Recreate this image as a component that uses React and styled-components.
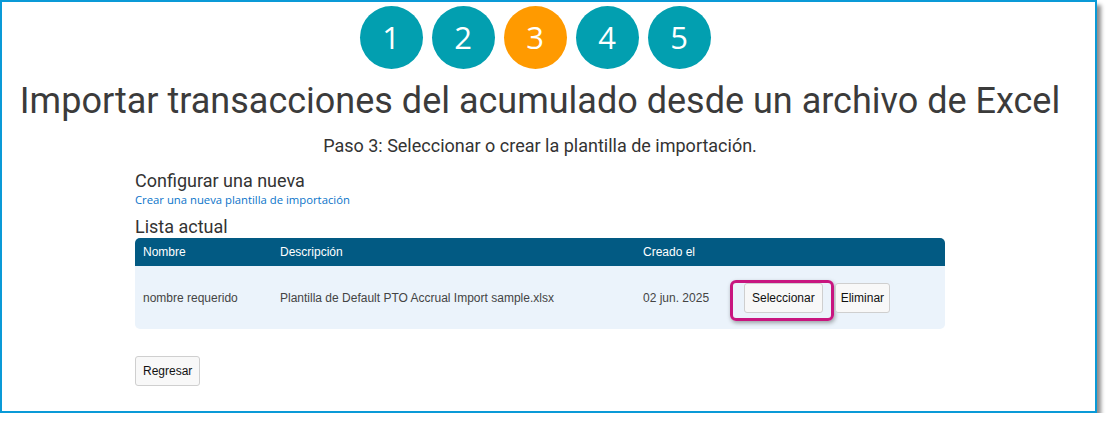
import React from "react";
import styled, { createGlobalStyle } from "styled-components";

const Global = createGlobalStyle`
  html, body { margin: 0; padding: 0; background: #ffffff; }
  body { font-family: Roboto, "Liberation Sans", sans-serif; }
`;

const Frame = styled.div`
  box-sizing: border-box;
  width: 1097px;
  height: 413px;
  border: 2px solid #0a9ad7;
  background: #ffffff;
  box-shadow: 4px 5px 4px rgba(0, 0, 0, 0.45);
  position: relative;
`;

const Content = styled.div`
  width: 1076px;
  display: flex;
  flex-direction: column;
  align-items: center;
`;

const Stepper = styled.div`
  display: flex;
  gap: 9px;
  padding-top: 4px;
  margin-right: 10px;
`;

const Step = styled.div`
  width: 63px;
  height: 63px;
  border-radius: 50%;
  background: ${(p) => (p.$active ? "#ff9a00" : "#029fb0")};
  color: #ffffff;
  display: flex;
  align-items: center;
  justify-content: center;
  font-family: "Open Sans", sans-serif;
  font-size: 31px;
  line-height: 1;
`;

const Title = styled.h1`
  margin: 10px 0 0;
  font-family: Roboto, sans-serif;
  font-weight: 400;
  font-size: 36px;
  line-height: 44px;
  color: #3b3b3b;
  white-space: nowrap;
`;

const Subtitle = styled.p`
  margin: 11px 0 0;
  font-family: Roboto, sans-serif;
  font-size: 18px;
  line-height: 24px;
  color: #333333;
`;

const Section = styled.div`
  align-self: flex-start;
  margin-left: 133px;
  width: 810px;
  display: flex;
  flex-direction: column;
  align-items: flex-start;
`;

const Heading = styled.h3`
  margin: ${(p) => p.$mt || "0"} 0 0;
  font-family: Roboto, sans-serif;
  font-weight: 400;
  font-size: 18px;
  line-height: 22px;
  color: #333333;
`;

const Link = styled.a`
  font-family: "Open Sans", sans-serif;
  font-size: 11.3px;
  line-height: 14px;
  color: #0a74c9;
  text-decoration: none;
  margin-top: 1px;
  margin-bottom: 9px;
`;

const Table = styled.div`
  width: 810px;
  border-radius: 5px;
  overflow: hidden;
  font-family: "Liberation Sans", Arial, sans-serif;
  font-size: 12px;
`;

const Row = styled.div`
  display: grid;
  grid-template-columns: 137px 363px 101px 1fr;
  align-items: center;
  height: ${(p) => (p.$head ? "28px" : "63px")};
  background: ${(p) => (p.$head ? "#025a83" : "#ebf3fb")};
  color: ${(p) => (p.$head ? "#ffffff" : "#444444")};
`;

const Cell = styled.div`
  padding-left: 8px;
  display: flex;
  align-items: center;
`;

const Button = styled.button`
  box-sizing: border-box;
  height: 30px;
  padding: 0 ${(p) => p.$px || 8}px;
  margin-right: ${(p) => p.$mr || 0}px;
  background: #f8f8f8;
  border: 1px solid #cfcfcf;
  border-radius: 3px;
  font-family: "Liberation Sans", Arial, sans-serif;
  font-size: 12px;
  color: #111111;
  position: relative;
`;

const Highlight = styled.span`
  position: absolute;
  left: -15px;
  top: -4px;
  right: -12px;
  bottom: -9px;
  border: 3px solid #c8167f;
  border-radius: 6px;
  box-shadow: 1px 2px 4px rgba(0, 0, 0, 0.35);
  pointer-events: none;
`;

const BackWrap = styled.div`
  margin-top: 27px;
`;

export default function App() {
  return (
    <>
      <Global />
      <Frame>
        <Content>
          <Stepper>
            {[1, 2, 3, 4, 5].map((n) => (
              <Step key={n} $active={n === 3}>
                {n}
              </Step>
            ))}
          </Stepper>
          <Title>Importar transacciones del acumulado desde un archivo de Excel</Title>
          <Subtitle>Paso 3: Seleccionar o crear la plantilla de importación.</Subtitle>
          <Section>
            <Heading $mt="12px">Configurar una nueva</Heading>
            <Link href="#">Crear una nueva plantilla de importación</Link>
            <Heading>Lista actual</Heading>
            <Table>
              <Row $head>
                <Cell>Nombre</Cell>
                <Cell>Descripción</Cell>
                <Cell>Creado el</Cell>
                <Cell />
              </Row>
              <Row>
                <Cell>nombre requerido</Cell>
                <Cell>Plantilla de Default PTO Accrual Import sample.xlsx</Cell>
                <Cell>02 jun. 2025</Cell>
                <Cell>
                  <Button $px={7} $mr={12}>
                    Seleccionar
                    <Highlight />
                  </Button>
                  <Button $px={5}>Eliminar</Button>
                </Cell>
              </Row>
            </Table>
            <BackWrap>
              <Button $px={7}>Regresar</Button>
            </BackWrap>
          </Section>
        </Content>
      </Frame>
    </>
  );
}
